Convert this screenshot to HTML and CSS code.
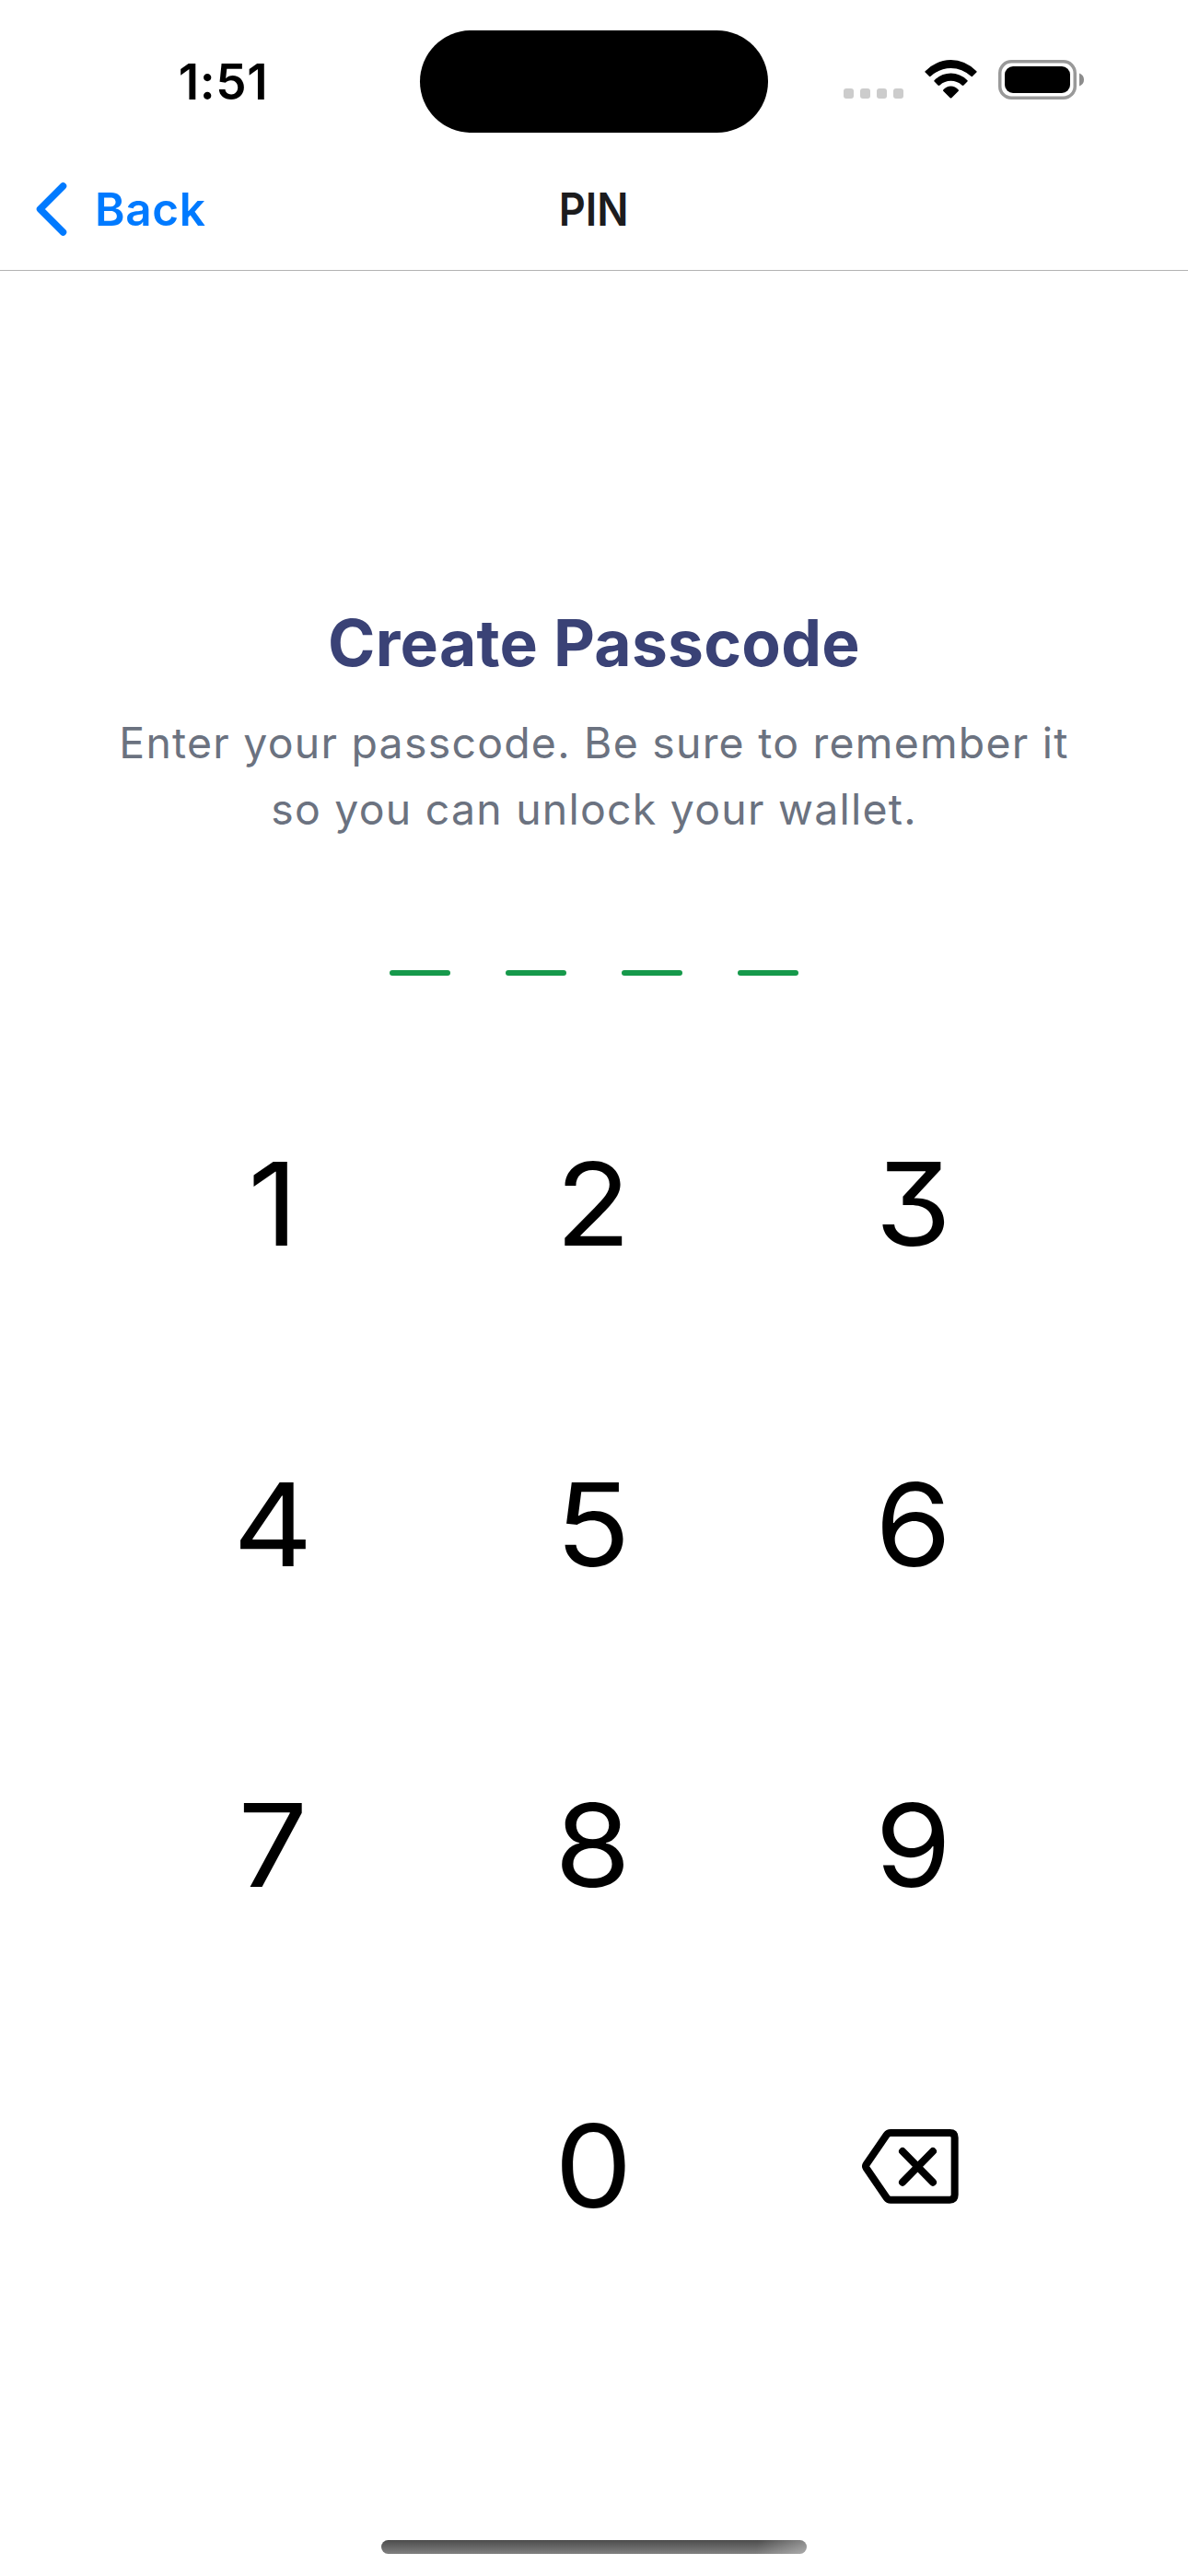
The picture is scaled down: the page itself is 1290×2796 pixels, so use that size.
FILE: index.html
```html
<!DOCTYPE html>
<html lang="en">
<head>
<meta charset="utf-8">
<title>PIN</title>
<link rel="stylesheet" href="styles.css">
</head>
<body>
<div class="screen">
  <div class="status">
    <div class="status-left"><span class="time">1:51</span></div>
    <div class="island"></div>
    <div class="status-right">
      <div class="signal"><i></i><i></i><i></i><i></i></div>
      <svg class="wifi" viewBox="371 105 173 127">
        <path d="M373 142Q411 105 457.500 105T542 142Q544 144 542 146L529 159Q527 161 524 159Q495 132 457.500 132T391 159Q388 161 386 159L373 146Q371 144 373 142Z"/>
        <path d="M403 172Q427 149 457.500 149T512 172Q514 174 512 176L500 188Q497 191 494 188Q478 174 457.500 174T421 188Q418 191 415 188L403 176Q401 174 403 172Z"/>
        <path d="M433 203Q443 191.500 457.500 191.500T482 203Q485 206 482 208L460 230Q457.500 232 455 230L433 208Q430 206 433 203Z"/>
      </svg>
      <svg class="battery" viewBox="0 0 94 44">
        <rect x="1.750" y="1.750" width="81.500" height="39.500" rx="12.500" fill="none" stroke="#999" stroke-width="3.500"/>
        <rect x="7" y="7" width="71" height="29" rx="9"/>
        <path d="M88 14.500Q93 16.500 93 21.500T88 28.500Z" fill="#8c8c8c"/>
      </svg>
    </div>
  </div>
  <header class="nav">
    <a class="back">
      <svg class="chevron" viewBox="0 0 34 58"><path d="M29.500 4L4.500 29L29.500 54"/></svg>
      <span class="back-label">Back</span>
    </a>
    <span class="nav-title">PIN</span>
    <span></span>
  </header>
  <main class="content">
    <h1 class="title">Create Passcode</h1>
    <p class="text">Enter your passcode. Be sure to remember it<br>so you can unlock your wallet.</p>
    <div class="slots"><i></i><i></i><i></i><i></i></div>
    <div class="keypad">
      <div class="key"><span>1</span></div><div class="key"><span>2</span></div><div class="key"><span>3</span></div>
      <div class="key"><span>4</span></div><div class="key"><span>5</span></div><div class="key"><span>6</span></div>
      <div class="key"><span>7</span></div><div class="key"><span>8</span></div><div class="key"><span>9</span></div>
      <div class="key"></div><div class="key"><span>0</span></div>
      <div class="key">
        <svg class="delete" viewBox="9 3 420 360">
          <path d="M141 75H334Q350 75 350 91V277Q350 293 334 293H141Q133 293 128 286L62 190Q58 184 62 178L128 82Q133 75 141 75Z"/>
          <path d="M180 135L279 236M279 135L180 236"/>
        </svg>
      </div>
    </div>
  </main>
  <div class="home"></div>
</div>
</body>
</html>
```
FILE: styles.css
```css
* { box-sizing: border-box; }
body {
  margin: 0;
  background: #fff;
  color: #000;
  font-family: Inter, "Liberation Sans", sans-serif;
}
.screen { width: 1290px; height: 2796px; overflow: hidden; background: #fff; }

.status {
  height: 177px;
  display: grid;
  grid-template-columns: 456px 378px 456px;
  align-items: center;
}
.status-left { padding-left: 29px; text-align: center; }
.time { font-size: 53px; font-weight: 600; line-height: 60px; letter-spacing: 0.6px; }
.island { height: 111px; border-radius: 56px; background: #000; }
.status-right { display: flex; align-items: flex-end; padding: 0 0 3px 82px; }
.signal { display: flex; gap: 7px; padding-bottom: 2px; }
.signal i { width: 11px; height: 11px; border-radius: 3px; background: #ccc; }
.wifi { width: 57px; height: 42px; margin: 0 0 2px 23px; }
.battery { width: 94px; height: 44px; margin-left: 23px; }

.nav {
  height: 117px;
  padding-bottom: 16px;
  border-bottom: 1px solid #b3b3b3;
  display: grid;
  grid-template-columns: 1fr auto 1fr;
  align-items: center;
  font-size: 49.5px;
  font-weight: 600;
  line-height: 60px;
}
.back { display: flex; align-items: center; padding-left: 39px; color: #007aff; }
.chevron { width: 34px; height: 58px; fill: none; stroke: currentColor; stroke-width: 7.5; stroke-linecap: round; stroke-linejoin: round; }
.back-label { margin-left: 30px; letter-spacing: 0.6px; }
.nav-title { color: #1c1c1e; transform: scaleX(0.91); }

.content { padding-top: 356px; text-align: center; }
.title { margin: 0; font-size: 69.5px; font-weight: 700; line-height: 96px; letter-spacing: 0.25px; color: #3a4276; }
.text { margin: 24px 0 0; font-size: 46.4px; line-height: 72px; letter-spacing: 1.25px; color: #6b7280; white-space: nowrap; }
.slots { margin-top: 139px; display: flex; justify-content: center; gap: 60px; }
.slots i { width: 66px; height: 6px; border-radius: 3px; background: #16994b; }
.keypad {
  width: 1044px;
  margin: 74px auto 0;
  display: grid;
  grid-template-columns: repeat(3, 348px);
  grid-auto-rows: 348px;
}
.key { display: flex; align-items: center; justify-content: center; font-size: 124.8px; line-height: 150px; font-feature-settings: "cv09"; }
.key span { transform: translateX(-1px) scaleX(1.07); }
.delete { width: 140px; height: 120px; fill: none; stroke: #000; stroke-width: 24; stroke-linecap: round; stroke-linejoin: round; }

.home {
  width: 462px;
  height: 15px;
  margin: 232px auto 0;
  border-radius: 8px;
  background: linear-gradient(100deg, transparent 88%, rgba(255, 255, 255, .35)), linear-gradient(#4c4c4c, #808080);
}
```
